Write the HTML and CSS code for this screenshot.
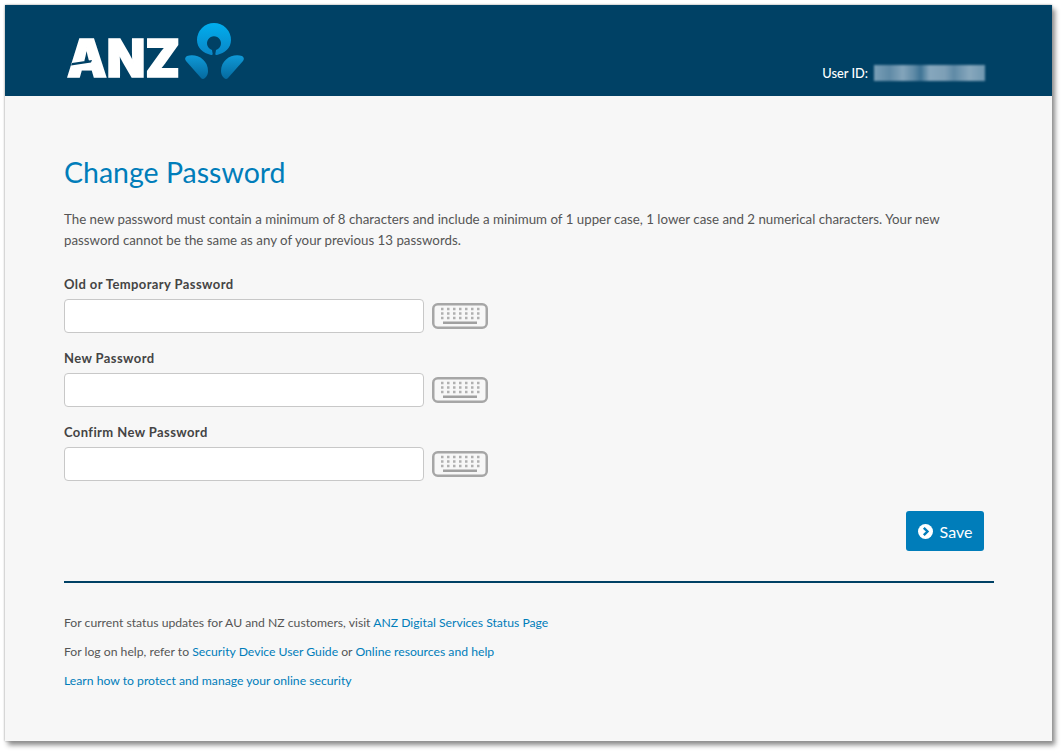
FILE: index.html
```html
<!DOCTYPE html>
<html lang="en">
  <head>
    <meta charset="UTF-8" />
    <title>Change Password</title>
    <link rel="stylesheet" href="styles.css">
  </head>

  <body>
    <svg width="0" height="0" class="defs">
      <defs>
        <linearGradient id="blue" x1="0" y1="0" x2="0" y2="1">
          <stop offset="0" stop-color="#00aeef" />
          <stop offset="1" stop-color="#0a86c6" />
        </linearGradient>
        <linearGradient id="leaf" x1="0" y1="0" x2="0" y2="1">
          <stop offset="0" stop-color="#0f9ad8" />
          <stop offset="1" stop-color="#056a9f" />
        </linearGradient>
        <symbol id="keyboard" viewBox="0 0 56 26">
          <rect x="1.25" y="1.25" width="53.5" height="23.5" rx="4.5" fill="none" stroke="#a6a6a6" stroke-width="2.5" />
          <path d="M9 6H48M9 10.500H48M9 15H48" stroke="#b0b0b0" stroke-width="2.400" stroke-dasharray="2.500 3.500" fill="none" />
          <rect x="11" y="18.500" width="34" height="2.500" fill="#a0a0a0" />
        </symbol>
      </defs>
    </svg>

    <div class="card">
      <header class="top">
        <svg class="logo" width="180" height="60" viewBox="0 0 180 60">
          <text x="0" y="54" class="logo-text" textLength="113" lengthAdjust="spacingAndGlyphs">ANZ</text>
          <path d="M5 40L25 37L24 39.500L4 42.500Z" fill="#004165" />
          <path fill="url(#blue)" d="M144 32C136 30 130 25 130 17A17 17 0 0 1 164 17C164 25 158 30 150 32C148.500 32.500 148 31 148.500 30L149 27A7 7 0 1 0 145 27L145.500 30C146 31 145.500 32.500 144 32Z" />
          <path fill="url(#leaf)" d="M120 33c9-3 21 3 21 15 0 3-1 5-3 7-1.500 1.300-2.800 1.300-4 0l-15-17c-1.500-1.800-1-4 1-5z" />
          <path fill="url(#leaf)" d="M175 33c-9-3-21 3-21 15 0 3 1 5 3 7 1.500 1.300 2.800 1.300 4 0l15-17c1.500-1.800 1-4-1-5z" />
        </svg>
        <div class="user">
          <span>User ID:</span>
          <span class="blur"></span>
        </div>
      </header>

      <main class="content">
        <h1>Change Password</h1>
        <p class="intro">The new password must contain a minimum of 8 characters and include a minimum of 1 upper case, 1 lower case and 2 numerical characters. Your new password cannot be the same as any of your previous 13 passwords.</p>

        <form class="fields">
          <label>Old or Temporary Password</label>
          <div class="row">
            <input type="password" />
            <svg class="kb" width="56" height="26"><use href="#keyboard" /></svg>
          </div>
          <label>New Password</label>
          <div class="row">
            <input type="password" />
            <svg class="kb" width="56" height="26"><use href="#keyboard" /></svg>
          </div>
          <label>Confirm New Password</label>
          <div class="row">
            <input type="password" />
            <svg class="kb" width="56" height="26"><use href="#keyboard" /></svg>
          </div>
        </form>

        <div class="actions">
          <button class="save" type="button">
            <svg width="15" height="15" viewBox="0 0 15 15">
              <circle cx="7.500" cy="7.500" r="7.500" fill="#fff" />
              <path d="M5.800 3.800L9.500 7.500L5.800 11.200" fill="none" stroke="#007dba" stroke-width="2.400" />
            </svg>
            Save
          </button>
        </div>

        <hr />

        <footer class="links">
          <p>For current status updates for AU and NZ customers, visit <a href="#">ANZ Digital Services Status Page</a></p>
          <p>For log on help, refer to <a href="#">Security Device User Guide</a> or <a href="#">Online resources and help</a></p>
          <p><a href="#">Learn how to protect and manage your online security</a></p>
        </footer>
      </main>
    </div>
  </body>
</html>
```

FILE: styles.css
```css
html {
  height: 100%;
}
body {
  margin: 0;
  height: 100%;
  box-sizing: border-box;
  padding: 5px 0 0 5px;
  background-color: #fff;
  font-family: "Lato", sans-serif;
  color: #555;
  overflow: hidden;
}
.defs {
  position: absolute;
}
.card {
  width: 1047px;
  height: 736px;
  background-color: #f7f7f7;
  box-shadow: 0 0 2px #999, 3px 4px 5px #888;
}
.top {
  height: 91px;
  background-color: #004165;
  display: flex;
  justify-content: space-between;
  padding: 18px 67px 0 62px;
  box-sizing: border-box;
}
.logo {
  overflow: visible;
}
.logo-text {
  font-family: "Inter", sans-serif;
  font-weight: 900;
  font-size: 52px;
  fill: #fff;
  stroke: #fff;
  stroke-width: 1.600px;
}
.user {
  display: flex;
  align-items: center;
  gap: 6px;
  height: 18px;
  margin-top: 41px;
  color: #fff;
  font-size: 12.800px;
  font-weight: 500;
}
.blur {
  width: 111px;
  height: 16px;
  background: linear-gradient(90deg, #7a9fb7 0, #5f8aa6 14%, #84a5bb 26%, #5f8aa6 36%, #3d7394 42%, #86a7bd 50%, #7d9fb6 64%, #5f8aa6 72%, #88a8bd 86%, #6f97b0 100%);
  filter: blur(1.200px);
}
.content {
  padding: 0 58px 0 59px;
}
h1 {
  margin: 0;
  padding-top: 55px;
  font-size: 28.500px;
  line-height: 42px;
  font-weight: 400;
  color: #007dba;
}
.intro {
  margin: 16px 0 0;
  font-size: 13.300px;
  line-height: 21px;
}
.fields {
  margin-top: 23px;
}
.fields label {
  display: block;
  color: #444;
  font-size: 13px;
  font-weight: 700;
  letter-spacing: 0.400px;
  line-height: 20px;
}
.row {
  display: flex;
  align-items: center;
  gap: 8px;
  margin: 5px 0 15px;
}
.row input {
  width: 360px;
  height: 34px;
  box-sizing: border-box;
  border: 1px solid #c8c8c8;
  border-radius: 4px;
  background-color: #fff;
}
.actions {
  display: flex;
  justify-content: flex-end;
  padding: 15px 10px 0 0;
}
.save {
  width: 78px;
  height: 40px;
  display: flex;
  align-items: center;
  justify-content: center;
  gap: 7px;
  border: 0;
  border-radius: 3px;
  background-color: #007dba;
  color: #fff;
  font-family: inherit;
  font-size: 16px;
}
hr {
  margin: 30px 0 0;
  border: 0;
  height: 2px;
  background-color: #004165;
}
.links {
  padding-top: 31px;
  font-size: 12.200px;
}
.links p {
  margin: 0 0 11px;
  line-height: 18px;
}
.links a {
  color: #007dba;
  text-decoration: none;
}
```
